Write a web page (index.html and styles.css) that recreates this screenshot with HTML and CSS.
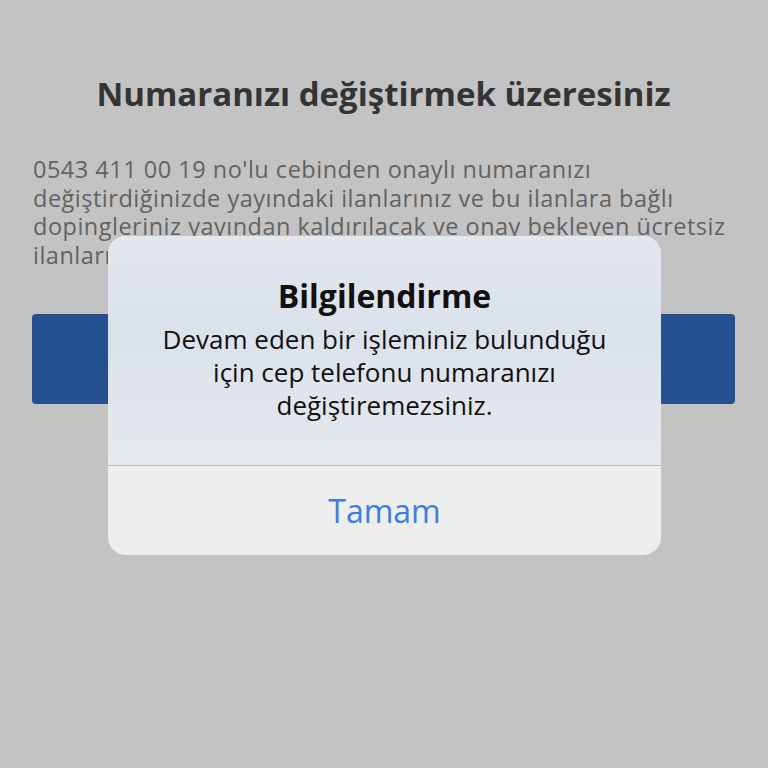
FILE: index.html
```html
<!DOCTYPE html>
<html lang="tr">
<head>
<meta charset="utf-8">
<link rel="stylesheet" href="styles.css">
</head>
<body>
<div class="page">
  <h1 class="page-title">Numaranızı değiştirmek üzeresiniz</h1>
  <p class="page-text">0543 411 00 19 no'lu cebinden onaylı numaranızı değiştirdiğinizde yayındaki ilanlarınız ve bu ilanlara bağlı dopingleriniz yayından kaldırılacak ve onay bekleyen ücretsiz ilanlarınız silinecektir.</p>
  <div class="primary-btn"></div>
</div>
<div class="alert">
  <div class="alert-body">
    <div class="alert-title">Bilgilendirme</div>
    <div class="alert-msg">Devam eden bir işleminiz bulunduğu<br>için cep telefonu numaranızı<br>değiştiremezsiniz.</div>
  </div>
  <div class="alert-action">Tamam</div>
</div>
</body>
</html>
```
FILE: styles.css
```css
html, body {
  margin: 0;
  padding: 0;
  width: 768px;
  height: 768px;
  overflow: hidden;
  background: #c3c3c3;
  font-family: "Open Sans", "Liberation Sans", sans-serif;
}
.page {
  display: flex;
  flex-direction: column;
  padding: 0 33px 0 32px;
}
.page-title {
  margin: 74px 0 0;
  font-size: 33px;
  font-weight: 700;
  color: #343434;
  text-align: center;
  line-height: 40px;
  white-space: nowrap;
}
.page-text {
  margin: 41px 0 0;
  padding-left: 1px;
  font-size: 23.5px;
  line-height: 28.5px;
  letter-spacing: 0.5px;
  color: #626262;
}
.primary-btn {
  margin-top: 45px;
  height: 90px;
  background: #25508f;
  border-radius: 4px;
}
.alert {
  position: absolute;
  left: 108px;
  top: 236px;
  width: 553px;
  height: 319px;
  border-radius: 18px;
  overflow: hidden;
  display: flex;
  flex-direction: column;
  background: #eeeeee;
}
.alert-body {
  height: 230px;
  flex: none;
  border-bottom: 1px solid #b6b9bd;
  background: linear-gradient(180deg, #e3e7ee 0%, #dbe2ec 40%, #e6e9ed 100%);
  display: flex;
  flex-direction: column;
  align-items: center;
  padding-top: 40px;
  box-sizing: border-box;
}
.alert-title {
  font-size: 32px;
  font-weight: 700;
  color: #111;
  line-height: 40px;
}
.alert-msg {
  margin-top: 7px;
  font-size: 26px;
  line-height: 33px;
  color: #111;
  text-align: center;
}
.alert-action {
  flex: 1;
  display: flex;
  align-items: center;
  justify-content: center;
  font-size: 32px;
  color: #3b7ee2;
}
```
